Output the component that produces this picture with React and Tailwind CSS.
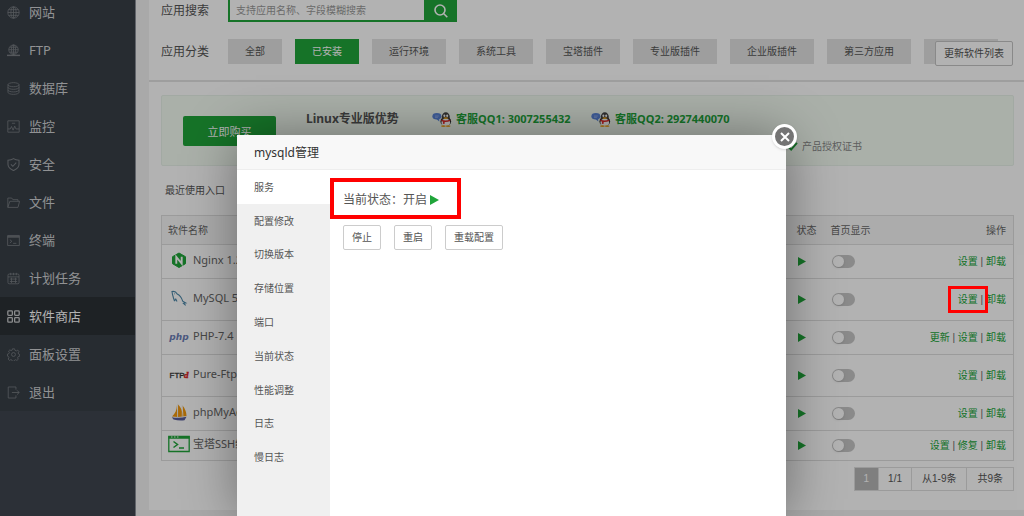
import { useState } from 'react';

const menu = [
  { label: '网站', icon: 'site' },
  { label: 'FTP', icon: 'ftp' },
  { label: '数据库', icon: 'database' },
  { label: '监控', icon: 'monitor' },
  { label: '安全', icon: 'shield' },
  { label: '文件', icon: 'folder' },
  { label: '终端', icon: 'terminal' },
  { label: '计划任务', icon: 'calendar' },
  { label: '软件商店', icon: 'store' },
  { label: '面板设置', icon: 'gear' },
  { label: '退出', icon: 'exit' },
];

const categories = ['全部', '已安装', '运行环境', '系统工具', '宝塔插件', '专业版插件', '企业版插件', '第三方应用', '一键部署'];

const software = [
  { name: 'Nginx 1.20', icon: 'nginx', actions: ['设置', '卸载'], height: 'h-[34px]' },
  { name: 'MySQL 5.7', icon: 'mysql', actions: ['设置', '卸载'], height: 'h-[42px]', marked: '设置' },
  { name: 'PHP-7.4', icon: 'php', actions: ['更新', '设置', '卸载'], height: 'h-[34px]' },
  { name: 'Pure-Ftpd', icon: 'ftpd', actions: ['设置', '卸载'], height: 'h-[42px]' },
  { name: 'phpMyAdmin', icon: 'pma', actions: ['设置', '卸载'], height: 'h-[34px]' },
  { name: '宝塔SSH终端', icon: 'ssh', actions: ['设置', '修复', '卸载'], height: 'h-[30px]' },
];

const tabs = ['服务', '配置修改', '切换版本', '存储位置', '端口', '当前状态', '性能调整', '日志', '慢日志'];

const menuPaths = {
  site: (
    <>
      <circle cx="8" cy="8" r="7" />
      <ellipse cx="8" cy="8" rx="3.2" ry="7" />
      <path d="M1 8h14M8 1v14M2 4.5h12M2 11.5h12" />
    </>
  ),
  ftp: (
    <>
      <circle cx="8" cy="7" r="5.8" />
      <ellipse cx="8" cy="7" rx="2.6" ry="5.8" />
      <path d="M2.2 7h11.6M8 1.2v12M3.2 4h9.6M3.2 10h9.6" />
      <path d="M0 14h16" strokeWidth="1.8" />
    </>
  ),
  database: (
    <>
      <ellipse cx="8" cy="3.3" rx="6.8" ry="2.5" />
      <path d="M1.2 3.3v9.4c0 1.4 3 2.5 6.8 2.5s6.8-1.1 6.8-2.5V3.3M1.2 6.5C1.2 7.900 4.200 9 8 9s6.800-1.100 6.800-2.500M1.200 9.700c0 1.400 3 2.500 6.800 2.500s6.800-1.100 6.800-2.500" />
    </>
  ),
  monitor: (
    <>
      <path d="M1 1h14v14H1z" />
      <path d="M6 4h4M1 11h3l1.500-3 2 4.500 2-5 1.500 3.500h4" />
    </>
  ),
  shield: (
    <g strokeWidth="1.300">
      <path d="M8 .8c2 1.300 4.300 1.900 6.800 2v5c0 3.600-2.600 6-6.800 7.700C3.800 13.800 1.200 11.400 1.200 7.800v-5c2.500-.1 4.800-.7 6.800-2z" />
      <path d="M4.800 7.800l2.400 2.400 4.200-4.400" />
    </g>
  ),
  folder: (
    <>
      <path d="M1 14V2.500h4.800l1.400 2h6.300v2" />
      <path d="M1 14L3.500 6.500h12L13.500 14z" />
    </>
  ),
  terminal: (
    <>
      <path d="M.8 1.800h14.400v12.400H.8zM.8 4h14.400M.8 3h14.400M3.500 7l2.500 2-2.500 2M7.500 11.500h4" />
    </>
  ),
  calendar: (
    <>
      <rect x="1.200" y="2.500" width="13.600" height="12" rx="1.500" />
      <path d="M1.200 6h13.600M4.500 1v3M8 1v3M11.500 1v3M3.500 8.700h9M3.500 11.700h9M5.500 7v6.500M10.500 7v6.500" />
    </>
  ),
  store: (
    <g strokeWidth="1.600">
      <rect x="1" y="1" width="5.600" height="5.600" rx="1" />
      <rect x="9.400" y="1" width="5.600" height="5.600" rx="1" />
      <rect x="1" y="9.400" width="5.600" height="5.600" rx="1" />
      <rect x="9.400" y="9.400" width="5.600" height="5.600" rx="1" />
    </g>
  ),
  gear: (
    <>
      <circle cx="8" cy="8" r="2.400" />
      <path d="M6.700 1h2.600l.5 1.900 1.700.7 1.700-1 1.500 1.800-1 1.600.6 1.500 1.400.5-.2 2.200-1.800.5-.6 1.400.8 1.700-1.700 1.500-1.600-.9-1.300.6-.6 1.400H6.700l-.5-1.500-1.500-.6-1.700 1-1.500-1.700.9-1.700-.6-1.400L.6 10V7.500L2.200 7l.7-1.500-1-1.600L3.500 2.300l1.600.9 1.200-.5z" />
    </>
  ),
  exit: <path d="M11 4.500V1.200H1.500v13.600H11v-3.300M6 8h9M12.300 5.300L15 8l-2.700 2.700" />,
};

function MenuIcon({ name }) {
  return (
    <svg viewBox="0 0 16 16" className="size-[13px] shrink-0" fill="none" stroke="currentColor" strokeWidth="1">
      {menuPaths[name]}
    </svg>
  );
}

function SoftIcon({ name }) {
  if (name === 'nginx') {
    return (
      <svg viewBox="0 0 22 22" className="size-[22px]">
        <path d="M11 4l6.500 3.700v7L11 18.500l-6.500-3.800v-7z" fill="#20a53a" stroke="#20a53a" strokeLinejoin="round" />
        <path d="M8.300 14.800V8l5.400 6.500V7.800" fill="none" stroke="#fff" strokeWidth="1.900" />
      </svg>
    );
  }
  if (name === 'mysql') {
    return (
      <svg viewBox="0 0 22 22" className="size-[22px]" fill="none" stroke="#4c87a8" strokeWidth="1.100">
        <path d="M6.500 14l-1-3-1-3.500-.5-3c2.500-.4 4.300.7 5.200 2.500 3.300 1.300 4.500 4 5.500 7.200l3 1.800-2.200.3 2.200 2M6.500 14l1.300-2 1.200 2.500" />
        <path d="M6.300 6.600l.5.500" />
      </svg>
    );
  }
  if (name === 'php') {
    return (
      <svg viewBox="0 0 22 22" className="size-[22px]">
        <text x="11" y="14.500" textAnchor="middle" fontFamily="DejaVu Sans" fontSize="9" fontWeight="700" fontStyle="italic" fill="#6c7eb7">php</text>
      </svg>
    );
  }
  if (name === 'ftpd') {
    return (
      <svg viewBox="0 0 22 22" className="size-[22px]">
        <text x="1.500" y="14.500" fontFamily="Liberation Sans" fontSize="8" fill="#333" stroke="#333" strokeWidth=".3">FTP</text>
        <text x="16" y="14.500" fontFamily="Liberation Serif" fontSize="9" fontWeight="700" fontStyle="italic" fill="#d81e1e" stroke="#d81e1e" strokeWidth=".4">d</text>
      </svg>
    );
  }
  if (name === 'pma') {
    return (
      <svg viewBox="0 0 22 22" className="size-[22px]">
        <path d="M8.800 4C9 9 7 13 4 15.500l5.500.5zM10 3.500V16l5-.5C14.500 10 13 6 10 3.500zM14.500 4.500c.5 4 .8 7.500.8 11l3.200-.5c0-4-1.500-7.500-4-10.500z" fill="#f2980d" />
        <path d="M3.800 16.300c5 .9 10 .7 14.700-.5l-2 3.400c-3.600.4-7.500.2-11-.7z" fill="#5a5f9e" />
        <path d="M9.600 3v13M14.200 4v12" stroke="#eee" strokeWidth=".7" />
      </svg>
    );
  }
  return (
    <svg viewBox="0 0 22 18" className="h-[18px] w-[22px]" fill="none" stroke="#20a53a">
      <path d="M.8 1.500h20.400v15H.8z" strokeWidth="1.300" />
      <path d="M.5 2.500h21" strokeWidth="2.500" />
      <path d="M3 2h1.500M6 2h1.500M9 2h1.500" stroke="#e8f5ea" />
      <path d="M5.500 6.500L9.500 9.500l-4 3M11 13h5" strokeWidth="1.500" />
    </svg>
  );
}

function QQIcon() {
  return (
    <svg viewBox="0 0 22 16" className="h-[15px] w-[21px] shrink-0">
      <ellipse cx="5" cy="4.500" rx="4.800" ry="3.500" fill="#5b86dc" />
      <path d="M4.500 7.500L7.500 10V7z" fill="#5b86dc" />
      <path d="M3 4.300h4M3 5.700h3" stroke="#a9c2f3" strokeWidth=".7" />
      <ellipse cx="14.500" cy="10" rx="5.700" ry="5" fill="#2b2b2b" />
      <ellipse cx="14.500" cy="5.200" rx="4.300" ry="4.900" fill="#444" />
      <ellipse cx="14.500" cy="11.200" rx="4.600" ry="4" fill="#fff" />
      <ellipse cx="13" cy="4" rx="1.100" ry="1.400" fill="#fff" />
      <ellipse cx="16" cy="4" rx="1.100" ry="1.400" fill="#fff" />
      <ellipse cx="14.500" cy="6.500" rx="2.500" ry=".9" fill="#f4a821" />
      <path d="M10 8c3 1.400 6 1.400 9 0l.4 1.600c-2 .9-4 1.200-6 1.100l-.3 2-1.800-.2.300-2-1.800-.8z" fill="#e22b2b" />
      <ellipse cx="12" cy="15" rx="2.600" ry=".9" fill="#f4a821" />
      <ellipse cx="17" cy="15" rx="2.600" ry=".9" fill="#f4a821" />
    </svg>
  );
}

function PlayIcon({ className }) {
  return (
    <svg viewBox="0 0 8 10" className={className} fill="#20a53a" preserveAspectRatio="none">
      <path d="M0 0l8 5-8 5z" />
    </svg>
  );
}

function Sidebar() {
  return (
    <aside className="w-[136px] shrink-0 border-r border-[#8d919a] bg-[#404550]">
      {/* first entry is partly scrolled out of view */}
      <nav className="-mt-[7px] flex flex-col bg-[#383f47]">
        {menu.map((item) => (
          <a
            key={item.label}
            href="#"
            className={
              item.label === '软件商店'
                ? 'flex h-[38px] items-center gap-[9px] bg-[#2c3135] pl-[7px] text-[13px] text-white'
                : 'flex h-[38px] items-center gap-[9px] pl-[7px] text-[13px] text-[#d0d2d4]'
            }
          >
            <span className={item.label === '软件商店' ? 'text-[#c8cacc]' : 'text-[#7a7f84]'}>
              <MenuIcon name={item.icon} />
            </span>
            <span className="pt-[2px]">{item.label}</span>
          </a>
        ))}
      </nav>
    </aside>
  );
}

function SoftwareTable() {
  return (
    <table className="w-full border-collapse border border-[#dfdfdf] text-[10px] text-[#666]">
      <thead>
        <tr className="h-[29px] bg-[#f6f6f6]">
          <th className="pl-[6px] text-left font-normal">软件名称</th>
          <th className="w-[34px] text-left font-normal">状态</th>
          <th className="w-[63px] text-left font-normal">首页显示</th>
          <th className="w-[120px] pr-[7px] text-right font-normal">操作</th>
        </tr>
      </thead>
      <tbody>
        {software.map((row) => (
          <tr key={row.name} className={`${row.height} border-t border-[#dfdfdf]`}>
            <td className="pb-1 pl-[6px]">
              <div className="flex items-center gap-[3px] text-[11px] leading-4">
                <SoftIcon name={row.icon} />
                <span>{row.name}</span>
              </div>
            </td>
            <td className="pl-px">
              <PlayIcon className="h-[9px] w-[8px]" />
            </td>
            <td>
              <input
                type="checkbox"
                aria-label={`${row.name} 首页显示`}
                className="ml-px block h-[13px] w-[23px] appearance-none rounded-full bg-[#c6c6c6] p-px before:block before:size-[11px] before:rounded-full before:bg-white before:shadow-sm"
              />
            </td>
            <td className="pr-[7px] text-right font-['Liberation_Sans','Noto_Sans_CJK_SC',sans-serif]">
              {row.actions.map((action, i) => (
                <span key={action}>
                  {i > 0 && ' | '}
                  <a href="#" className="relative text-[#20a53a]">
                    {action}
                    {row.marked === action && (
                      <span className="absolute -inset-x-[10px] -inset-y-2 z-20 border-3 border-[#ff0000]" />
                    )}
                  </a>
                </span>
              ))}
            </td>
          </tr>
        ))}
      </tbody>
    </table>
  );
}

function ManageDialog() {
  const [tab, setTab] = useState('服务');

  return (
    <div className="absolute inset-0 z-10 flex justify-center bg-black/30 pt-[135px] pr-px">
      <div role="dialog" aria-label="mysqld管理" className="relative flex w-[549px] flex-col bg-white text-[#555] shadow-[1px_1px_50px_rgba(0,0,0,0.4)]">
        <h2 className="h-[35px] border-b border-[#eee] bg-[#f8f8f8] pl-[17px] text-[12px] leading-[35px] text-[#333]">mysqld管理</h2>
        <button
          type="button"
          aria-label="关闭"
          className="absolute -top-[11px] -right-[11px] flex size-[25px] items-center justify-center rounded-full border-3 border-white bg-[#747474] shadow-sm"
        >
          <svg viewBox="0 0 10 10" className="size-[10px]" stroke="#fff" strokeWidth="2">
            <path d="M1 1l8 8M9 1L1 9" />
          </svg>
        </button>
        <div className="flex flex-1">
          <div className="w-[93px] bg-[#f0f0f0]">
            <div className="grid h-[304px] auto-rows-fr">
              {tabs.map((item) => (
                <button
                  key={item}
                  type="button"
                  onClick={() => setTab(item)}
                  className={
                    item === tab
                      ? 'bg-white pt-px pl-[17px] text-left text-[10px]'
                      : 'pt-px pl-[17px] text-left text-[10px]'
                  }
                >
                  {item}
                </button>
              ))}
            </div>
          </div>
          <div className="flex-1 pt-2 pl-[13px]">
            <p className="relative flex h-[41px] items-center gap-[3px] pt-[3px] text-[12px]">
              当前状态：开启
              <PlayIcon className="h-[10px] w-[9px]" />
              <span className="absolute inset-y-0 -left-[13px] w-[131px] border-4 border-[#ff0000]" />
            </p>
            <div className="mt-[6px] flex gap-[13px] text-[10px]">
              <button type="button" className="h-[25px] rounded-xs border border-[#ccc] px-2">停止</button>
              <button type="button" className="h-[25px] rounded-xs border border-[#ccc] px-2">重启</button>
              <button type="button" className="h-[25px] rounded-xs border border-[#ccc] px-2">重载配置</button>
            </div>
          </div>
        </div>
      </div>
    </div>
  );
}

export default function App() {
  const [category, setCategory] = useState('已安装');

  return (
    <div className="relative flex h-screen overflow-hidden bg-[#f3f3f3] font-['Noto_Sans','Noto_Sans_CJK_SC',sans-serif] text-[#555]">
      <Sidebar />
      <main className="min-w-0 flex-1 pl-[13px]">
        <div className="bg-white">
          <section className="relative border-b-2 border-[#e2e2e2] pb-[16px] pl-3">
            <div className="flex h-[22px] items-center">
              <label htmlFor="search" className="w-[67px] text-[12px]">应用搜索</label>
              <input
                id="search"
                placeholder="支持应用名称、字段模糊搜索"
                className="h-full w-[196px] border-2 border-t-0 border-r-0 border-[#20a53a] px-[6px] text-[10px] placeholder:text-[#999]"
              />
              <button type="button" aria-label="搜索" className="flex h-full w-[33px] items-center justify-center bg-[#20a53a]">
                <svg viewBox="0 0 14 14" className="size-[14px]" fill="none" stroke="#fff" strokeWidth="1.600">
                  <circle cx="6" cy="6" r="5" />
                  <path d="M9.800 9.800l3.500 3.500" />
                </svg>
              </button>
            </div>
            <div className="mt-[17px] flex h-[25px] items-center overflow-hidden">
              <span className="w-[67px] shrink-0 text-[12px]">应用分类</span>
              <div className="flex gap-[13px] text-[10px] whitespace-nowrap">
                {categories.map((item) => (
                  <button
                    key={item}
                    type="button"
                    onClick={() => setCategory(item)}
                    className={
                      item === category
                        ? 'h-[25px] bg-[#20a53a] px-[17px] text-white'
                        : 'h-[25px] bg-[#e3e3e3] px-[17px] text-[#555]'
                    }
                  >
                    {item}
                  </button>
                ))}
              </div>
            </div>
            <button
              type="button"
              className="absolute top-[41px] right-[11px] h-[25px] rounded-xs border border-[#c4c4c4] bg-white px-2 text-[10px]"
            >
              更新软件列表
            </button>
          </section>

          <div className="pt-[13px] pr-[10px] pb-[19px] pl-3">
            <section className="flex h-[71px] items-start rounded-xs border border-[#e9f3ea] bg-[#f4fdf3] pl-[21px]">
              <button type="button" className="mt-5 h-[30px] w-[93px] rounded-xs bg-[#20a53a] pt-[2px] text-[11px] text-white">立即购买</button>
              <div className="ml-[30px] flex-1 pt-[14px]">
                <div className="flex h-[18px] items-center">
                  <h3 className="w-[126px] text-[12px] font-bold">Linux专业版优势</h3>
                  <a href="#" className="flex w-[159px] items-center gap-[3px] text-[11px] font-bold text-[#20a53a]">
                    <QQIcon />
                    客服QQ1: 3007255432
                  </a>
                  <a href="#" className="flex items-center gap-[3px] text-[11px] font-bold text-[#20a53a]">
                    <QQIcon />
                    客服QQ2: 2927440070
                  </a>
                </div>
                <p className="mt-[10px] flex items-center gap-1 pl-[481px] text-[10px] leading-4 text-[#888]">
                  <svg viewBox="0 0 12 10" className="h-[9px] w-[11px]" fill="none" stroke="#20a53a" strokeWidth="2">
                    <path d="M1 5l3.500 3.500L11 1" />
                  </svg>
                  产品授权证书
                </p>
              </div>
            </section>

            <h3 className="pl-1 text-[10px] leading-[49px]">最近使用入口</h3>
            <SoftwareTable />

            <div className="mt-[6px] flex justify-end font-['Liberation_Sans','Noto_Sans_CJK_SC',sans-serif] text-[10px]">
              <div className="flex h-[24px] divide-x divide-[#dfdfdf] border border-[#dfdfdf] leading-[22px]">
                <span className="bg-[#b6b6b6] px-[9px] text-white">1</span>
                <span className="px-[9px]">1/1</span>
                <span className="px-[10px]">从1-9条</span>
                <span className="px-[10px]">共9条</span>
              </div>
            </div>
          </div>
        </div>
      </main>
      <ManageDialog />
    </div>
  );
}
